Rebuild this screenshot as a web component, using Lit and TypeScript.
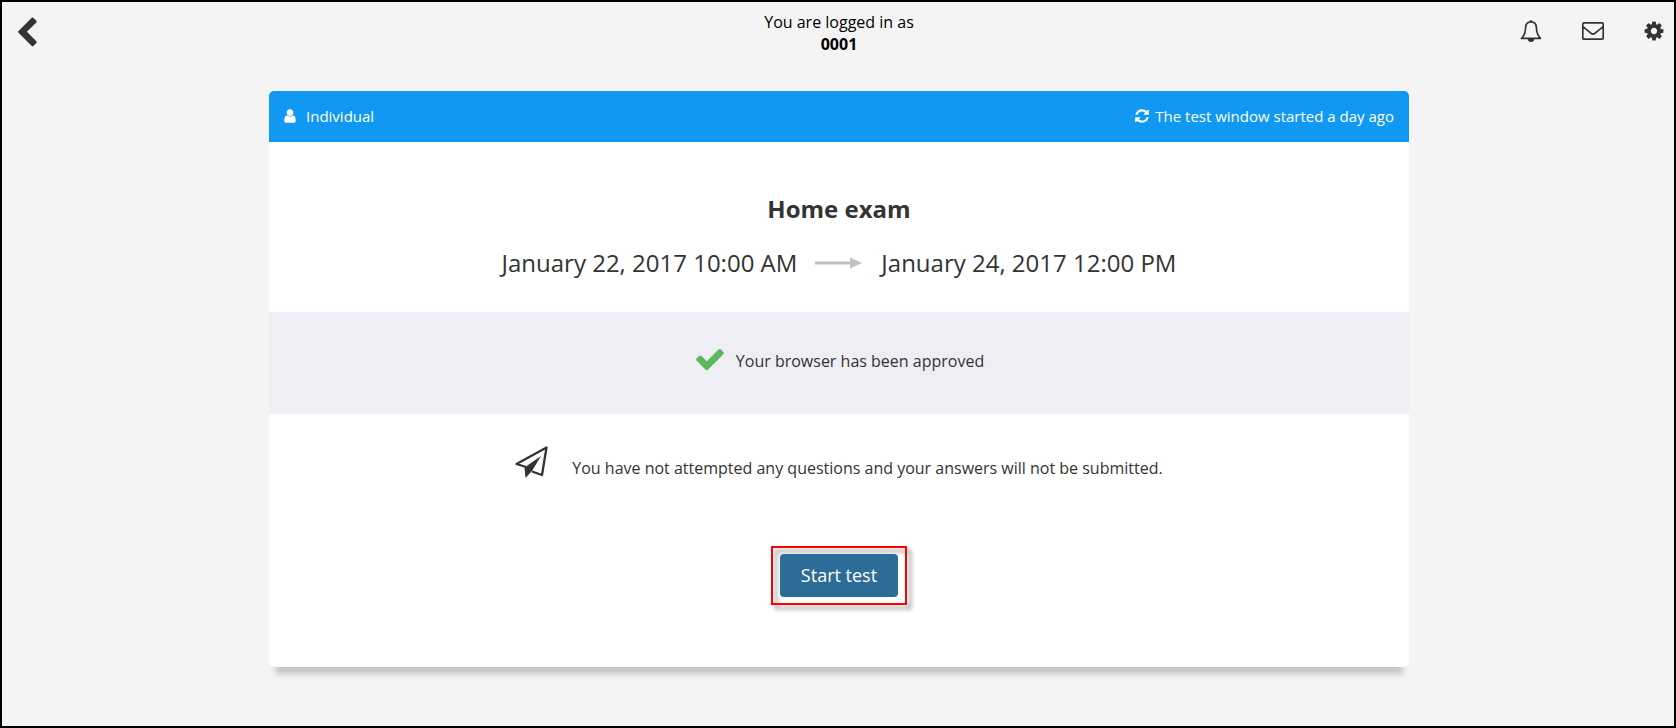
import { LitElement, html, css, svg } from "lit";
import { customElement, property } from "lit/decorators.js";

const back = svg`<path fill="currentColor" d="M1427 301l-531 531 531 531q19 19 19 45t-19 45l-166 166q-19 19-45 19t-45-19l-742-742q-19-19-19-45t19-45l742-742q19-19 45-19t45 19l166 166q19 19 19 45t-19 45z"/>`;
const check = svg`<path fill="currentColor" d="M1671 566q0 40-28 68l-724 724-136 136q-28 28-68 28t-68-28l-136-136-362-362q-28-28-28-68t28-68l136-136q28-28 68-28t68 28l294 295 656-657q28-28 68-28t68 28l136 136q28 28 28 68z"/>`;
const cog = svg`<path fill="currentColor" d="M1152 896q0-106-75-181t-181-75-181 75-75 181 75 181 181 75 181-75 75-181zm512-109v222q0 12-8 23t-20 13l-185 28q-19 54-39 91 35 50 107 138 10 12 10 25t-9 23q-27 37-99 108t-94 71q-12 0-26-9l-138-108q-44 23-91 38-16 136-29 186-7 28-36 28h-222q-14 0-24.500-8.500t-11.500-21.500l-28-184q-49-16-90-37l-141 107q-10 9-25 9-14 0-25-11-126-114-165-168-7-10-7-23 0-12 8-23 15-21 51-66.500t54-70.500q-27-50-41-99l-183-27q-13-2-21-12.500t-8-23.500v-222q0-12 8-23t19-13l186-28q14-46 39-92-40-57-107-138-10-12-10-24 0-10 9-23 26-36 98.500-107.500t94.500-71.500q13 0 26 10l138 107q44-23 91-38 16-136 29-186 7-28 36-28h222q14 0 24.500 8.500t11.500 21.500l28 184q49 16 90 37l142-107q9-9 24-9 13 0 25 10 129 119 165 170 7 8 7 22 0 12-8 23-15 21-51 66.500t-54 70.500q26 50 41 98l183 28q13 2 21 12.500t8 23.500z"/>`;
const refresh = svg`<path fill="currentColor" d="M1639 1056q0 5-1 7-64 268-268 434.500t-478 166.500q-146 0-282.500-55t-243.500-157l-129 129q-19 19-45 19t-45-19-19-45v-448q0-26 19-45t45-19h448q26 0 45 19t19 45-19 45l-137 137q71 66 161 102t187 36q134 0 250-65t186-179q11-17 53-117 8-23 30-23h192q13 0 22.500 9.500t9.500 22.500zm25-800v448q0 26-19 45t-45 19h-448q-26 0-45-19t-19-45 19-45l138-138q-148-137-349-137-134 0-250 65t-186 179q-11 17-53 117-8 23-30 23h-199q-13 0-22.500-9.500t-9.500-22.500v-7q65-268 270-434.500t480-166.500q146 0 284 55.500t245 156.500l130-129q19-19 45-19t45 19 19 45z"/>`;
const user = svg`<path fill="currentColor" d="M1536 1399q0 109-62.500 187t-150.500 78h-854q-88 0-150.500-78t-62.500-187q0-85 8.500-160.500t31.500-152 58.500-131 94-89 134.500-34.500q131 128 313 128t313-128q76 0 134.500 34.500t94 89 58.500 131 31.500 152 8.500 160.500zm-256-887q0 159-112.500 271.500t-271.500 112.500-271.500-112.500-112.500-271.500 112.500-271.500 271.500-112.500 271.500 112.500 112.500 271.500z"/>`;

@customElement("exam-card")
export class ExamCard extends LitElement {
  @property() name = "";
  @property() starts = "";
  @property() ends = "";

  static styles = css`
    :host {
      display: block;
      border-radius: 5px;
      background: #fff;
      color: #333;
      box-shadow: 0 13px 6px -6px rgba(0, 0, 0, 0.2);
    }
    svg {
      display: block;
      flex: none;
    }
    .banner {
      display: flex;
      justify-content: space-between;
      align-items: center;
      padding: 13px 15px 14px 13px;
      border-radius: 5px 5px 0 0;
      background: #1098f2;
      color: #fff;
      font-size: 15px;
      line-height: 24px;
    }
    .kind {
      display: flex;
      align-items: center;
      gap: 8px;
    }
    .window {
      display: flex;
      align-items: center;
      gap: 5px;
    }
    .summary {
      padding: 50px 16px 32px;
      text-align: center;
    }
    .name {
      margin: 0 0 20px;
      font-size: 24px;
      line-height: 34px;
      font-weight: 700;
    }
    .dates {
      display: flex;
      justify-content: center;
      align-items: center;
      gap: 18px;
      font-size: 24px;
      line-height: 34px;
    }
    .status {
      display: flex;
      justify-content: center;
      align-items: flex-start;
      gap: 10px;
      padding: 31px 16px 35px;
      background: #efeef5;
      font-size: 16px;
      line-height: 36px;
    }
    .tick {
      color: #5cb85c;
    }
    .action {
      display: flex;
      flex-direction: column;
      align-items: center;
      gap: 66px;
      padding: 32px 16px 62px;
      font-size: 16px;
    }
    .notice {
      display: flex;
      align-items: flex-end;
      gap: 24px;
      margin: 0;
      line-height: 24px;
    }
    .focus {
      position: relative;
      padding: 8px 9px;
    }
    .focus::before {
      content: "";
      position: absolute;
      inset: 0;
      border: 2px solid #f00;
      filter: drop-shadow(4px 4px 2px rgba(0, 0, 0, 0.45));
    }
    .start {
      position: relative;
      display: block;
      padding: 9px 21px 10px;
      border: 0;
      border-radius: 4px;
      background: #2d6c97;
      color: #fff;
      font: inherit;
      font-size: 18px;
      line-height: 24px;
      cursor: pointer;
    }
  `;

  render() {
    return html`
      <header class="banner">
        <span class="kind">
          <svg width="16" height="16" viewBox="0 0 1792 1792" aria-hidden="true">${user}</svg>
          Individual
        </span>
        <span class="window">
          <svg width="16" height="16" viewBox="0 0 1792 1792" aria-hidden="true">${refresh}</svg>
          The test window started a day ago
        </span>
      </header>
      <section class="summary">
        <h1 class="name">${this.name}</h1>
        <div class="dates">
          <time>${this.starts}</time>
          <svg width="48" height="12" viewBox="0 0 48 12" aria-hidden="true">
            <path fill="#bcc1c6" d="M0 4.500H35V.500L47 6 35 11.500V7.500H0z" />
          </svg>
          <time>${this.ends}</time>
        </div>
      </section>
      <section class="status">
        <svg class="tick" width="32" height="32" viewBox="0 0 1792 1792" aria-hidden="true">${check}</svg>
        <span>Your browser has been approved</span>
      </section>
      <section class="action">
        <p class="notice">
          <svg width="33" height="34" viewBox="0 0 33 34" aria-hidden="true">
            <path fill="none" stroke="currentColor" stroke-width="2.300" stroke-linejoin="round"
              d="M11 21L1.500 18 31.500 1.500 27 29 17 25.500" />
            <path fill="currentColor" d="M26 10L9.500 21.500 10.500 32 17 25z" />
          </svg>
          <span>You have not attempted any questions and your answers will not be submitted.</span>
        </p>
        <div class="focus"><button class="start" type="button">Start test</button></div>
      </section>
    `;
  }
}

@customElement("app-root")
export class AppRoot extends LitElement {
  static styles = css`
    :host {
      display: block;
      box-sizing: border-box;
      min-height: 100vh;
      padding-left: 2px;
      border: 2px solid #000;
      background: #f4f4f4;
      color: #000;
      font-family: "Open Sans", sans-serif;
    }
    svg {
      display: block;
    }
    .bar {
      display: grid;
      grid-template-columns: 1fr auto 1fr;
      align-items: start;
      padding: 9px 9px 0;
    }
    .login {
      text-align: center;
      font-size: 16px;
      line-height: 22px;
    }
    .login strong {
      display: block;
    }
    .icon {
      display: block;
      padding: 0;
      border: 0;
      background: none;
      color: #333;
      cursor: pointer;
    }
    .back {
      justify-self: start;
      padding-top: 6px;
    }
    .tools {
      display: flex;
      justify-content: flex-end;
      align-items: center;
      gap: 38px;
      padding-top: 8px;
    }
    .main {
      box-sizing: border-box;
      max-width: 1140px;
      margin: 36px auto 0;
      padding-bottom: 40px;
    }
  `;

  render() {
    return html`
      <header class="bar">
        <button class="icon back" type="button" aria-label="Back">
          <svg width="30" height="32" viewBox="128 0 1664 1792">${back}</svg>
        </button>
        <div class="login">You are logged in as <strong>0001</strong></div>
        <nav class="tools">
          <button class="icon" type="button" aria-label="Notifications">
            <svg width="24" height="24" viewBox="0 0 24 24">
              <path fill="none" stroke="currentColor" stroke-width="1.700" stroke-linejoin="round"
                d="M12 2.800C8.500 2.800 6.700 5.500 6.600 8.500C6.500 13.500 5.500 16.500 2.500 19.300H21.500C18.500 16.500 17.500 13.500 17.400 8.500C17.300 5.500 15.500 2.800 12 2.800z" />
              <path fill="currentColor" d="M11.200 1h1.600v2h-1.600zM8.800 20h6.400a3.200 3 0 0 1-6.400 0z" />
            </svg>
          </button>
          <button class="icon" type="button" aria-label="Messages">
            <svg width="24" height="24" viewBox="0 0 24 24">
              <path fill="none" stroke="currentColor" stroke-width="1.700" stroke-linejoin="round"
                d="M3 3.800H21Q22.200 3.800 22.200 5V19Q22.200 20.200 21 20.200H3Q1.800 20.200 1.800 19V5Q1.800 3.800 3 3.800zM2 7.500C5 10.500 8 12.500 10 14.300Q12 15.800 14 14.300C16 12.500 19 10.500 22 7.500" />
            </svg>
          </button>
          <button class="icon" type="button" aria-label="Settings">
            <svg width="22" height="22" viewBox="0 0 1792 1792">${cog}</svg>
          </button>
        </nav>
      </header>
      <main class="main">
        <exam-card
          name="Home exam"
          starts="January 22, 2017 10:00 AM"
          ends="January 24, 2017 12:00 PM"
        ></exam-card>
      </main>
    `;
  }
}
